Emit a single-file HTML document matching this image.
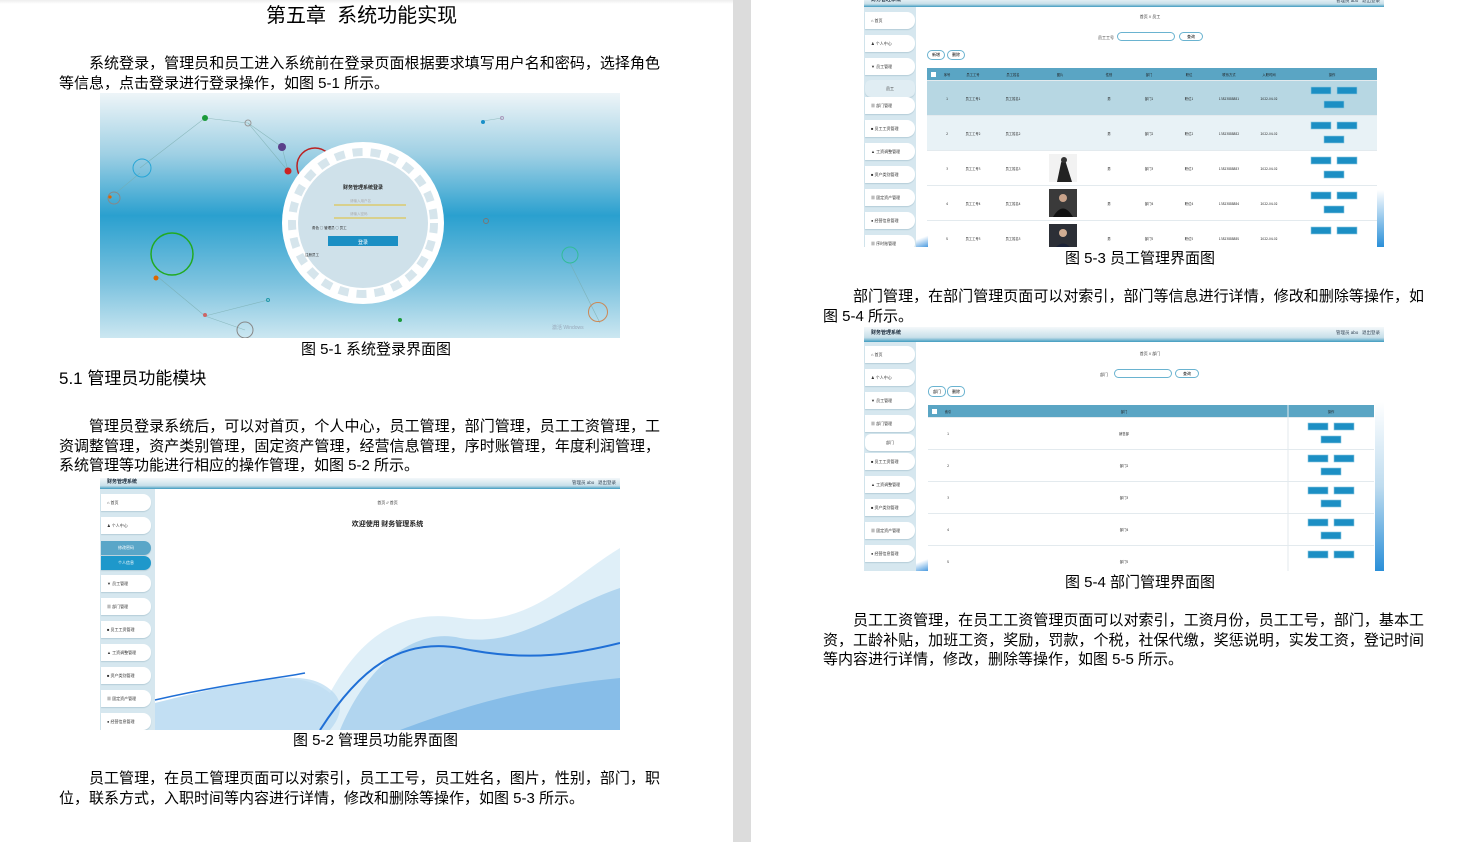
<!DOCTYPE html>
<html><head><meta charset="utf-8">
<style>
*{margin:0;padding:0;box-sizing:border-box}
body{width:1460px;height:842px;background:#fff;position:relative;overflow:hidden;font-family:"Liberation Sans","Noto Sans CJK SC",sans-serif;color:#000}
.a{position:absolute}
.p{position:absolute;width:601px;font-size:15px;line-height:19.6px;text-indent:30px;text-align:justify;text-align-last:left;font-family:"Liberation Sans","WenQuanYi Zen Hei","Noto Sans CJK SC",sans-serif}
.cap{position:absolute;font-size:15px;line-height:18px;white-space:nowrap;font-family:"Liberation Sans","WenQuanYi Zen Hei","Noto Sans CJK SC",sans-serif}
.shot{position:absolute;overflow:hidden;background:#fff}
.top{position:absolute;left:0;top:0;right:0;height:9px;background:linear-gradient(#f4f8fa,#c7dfe9 70%,#3f9bc0);font-size:5px;font-weight:bold;line-height:7px;padding-left:7px;color:#123}
.top span{position:absolute;right:4px;top:0;font-weight:normal;color:#345;font-size:4.5px}
.side{position:absolute;left:0;top:9px;width:52px;bottom:0;background:#d6e7ef}
.si{position:absolute;left:1px;width:50px;height:17px;background:#fff;border-radius:0 8px 8px 0;font-size:4px;line-height:17px;padding-left:6px;color:#333;box-shadow:0 1px 1px #b5cdd8}
.tb{font-size:4px;color:#333;text-align:center}
.row{position:absolute;left:0;right:0;border-bottom:1px solid #e3eaee}
</style></head><body>

<div class="a" style="left:733px;top:0;width:18px;height:842px;background:#dcdcdc"></div>
<div class="a" style="left:0;top:0;width:733px;height:4px;background:linear-gradient(#eee,#fff)"></div>

<div class="a" style="left:266px;top:4px;font-size:20px;line-height:24px;white-space:nowrap;font-family:'Liberation Sans','WenQuanYi Zen Hei',sans-serif">第五章&nbsp;&nbsp;系统功能实现</div>
<div class="p" style="left:59px;top:54px">系统登录，管理员和员工进入系统前在登录页面根据要求填写用户名和密码，选择角色等信息，点击登录进行登录操作，如图 5-1 所示。</div>

<div class="shot" style="left:100px;top:93px;width:520px;height:245px;background:linear-gradient(#eef5f8 0%,#9fd0e4 25%,#2aa0cf 50%,#7ec3df 78%,#cce7f1 100%)">
<svg width="520" height="245" style="position:absolute;left:0;top:0">
<g stroke="#7aa" stroke-width=".6" fill="none" opacity=".7">
<line x1="105" y1="25" x2="148" y2="30"/><line x1="148" y1="30" x2="182" y2="54"/><line x1="182" y1="54" x2="188" y2="78"/><line x1="148" y1="30" x2="188" y2="78"/><line x1="105" y1="25" x2="40" y2="75"/><line x1="40" y1="80" x2="10" y2="105"/><line x1="58" y1="184" x2="105" y2="223"/><line x1="105" y1="223" x2="168" y2="207"/><line x1="105" y1="223" x2="145" y2="237"/><line x1="383" y1="28" x2="402" y2="25"/><line x1="470" y1="170" x2="500" y2="230"/>
</g>
<circle cx="105" cy="25" r="3" fill="#1a9a3a"/><circle cx="148" cy="30" r="3" fill="none" stroke="#999"/>
<circle cx="182" cy="54" r="4" fill="#5a3f8a"/><circle cx="188" cy="78" r="3.5" fill="#c22"/>
<circle cx="215" cy="73" r="18" fill="none" stroke="#b22" stroke-width="1.5"/>
<circle cx="42" cy="75" r="9" fill="none" stroke="#29a6d6" stroke-width="1"/>
<circle cx="14" cy="105" r="6" fill="none" stroke="#888"/><circle cx="10" cy="104" r="1.6" fill="#d60"/>
<circle cx="72" cy="161" r="21" fill="none" stroke="#2a2" stroke-width="1.5"/><circle cx="56" cy="185" r="2.5" fill="#d60"/>
<circle cx="105" cy="222" r="2" fill="#c66"/><circle cx="145" cy="237" r="8" fill="none" stroke="#888"/><circle cx="168" cy="207" r="1.5" fill="none" stroke="#29a"/>
<circle cx="383" cy="29" r="2" fill="#1a8fc8"/><circle cx="402" cy="25" r="1.5" fill="none" stroke="#a9b"/>
<circle cx="386" cy="128" r="2.5" fill="none" stroke="#777"/><circle cx="300" cy="227" r="2" fill="#1a9a3a"/>
<circle cx="470" cy="162" r="8" fill="none" stroke="#3b9"/><circle cx="498" cy="219" r="9.5" fill="none" stroke="#c85" stroke-width="1"/>
<circle cx="263" cy="130" r="81" fill="#fff"/>
<circle cx="263" cy="130" r="71" fill="none" stroke="#d6e5ec" stroke-width="8" stroke-dasharray="10 8"/>
<circle cx="263" cy="130" r="65" fill="#cfe1ea"/>
<text x="263" y="96" font-size="5" font-weight="bold" text-anchor="middle" fill="#222" font-family="Noto Sans CJK SC">财务管理系统登录</text>
<line x1="234" y1="112" x2="306" y2="112" stroke="#e2c030"/><line x1="234" y1="125" x2="306" y2="125" stroke="#e2c030"/>
<text x="250" y="109" font-size="3.5" fill="#aaa" font-family="Noto Sans CJK SC">请输入用户名</text>
<text x="250" y="122" font-size="3.5" fill="#aaa" font-family="Noto Sans CJK SC">请输入密码</text>
<text x="212" y="136" font-size="3.5" fill="#222" font-family="Noto Sans CJK SC">角色  ○ 管理员 ○ 员工</text>
<rect x="228" y="143" width="70" height="10" fill="#1b8fc4"/>
<text x="263" y="151" font-size="5" text-anchor="middle" fill="#fff" font-family="Noto Sans CJK SC">登录</text>
<text x="205" y="163" font-size="3.5" fill="#222" font-family="Noto Sans CJK SC">注册员工</text>
<text x="452" y="236" font-size="5" fill="#9ab" font-family="Liberation Sans">激活 Windows</text>
</svg>
</div>
<div class="cap" style="left:301px;top:341px">图 5-1 系统登录界面图</div>
<div class="a" style="left:59px;top:368px;font-size:17px;line-height:21px;white-space:nowrap;font-family:'Liberation Sans','WenQuanYi Zen Hei',sans-serif">5.1 管理员功能模块</div>
<div class="p" style="left:59px;top:417px">管理员登录系统后，可以对首页，个人中心，员工管理，部门管理，员工工资管理，工资调整管理，资产类别管理，固定资产管理，经营信息管理，序时账管理，年度利润管理，系统管理等功能进行相应的操作管理，如图 5-2 所示。</div>

<div class="shot" style="left:100px;top:478px;width:520px;height:252px">
<div class="top" style="height:11px;line-height:9px">财务管理系统<span style="line-height:9px">管理员 abo &nbsp; 退出登录</span></div>
<div class="side" style="top:11px;width:55px">
<div class="si" style="top:5px">⌂ 首页</div>
<div class="si" style="top:28px">♟ 个人中心</div>
<div class="si" style="top:52px;background:#5aa6c8;color:#fff;text-align:center;padding:0;height:14px;line-height:14px">修改密码</div>
<div class="si" style="top:67px;background:#1e98cb;color:#fff;text-align:center;padding:0;height:14px;line-height:14px">个人信息</div>
<div class="si" style="top:86px">▼ 员工管理</div>
<div class="si" style="top:109px">▦ 部门管理</div>
<div class="si" style="top:132px">■ 员工工资管理</div>
<div class="si" style="top:155px">▲ 工资调整管理</div>
<div class="si" style="top:178px">■ 资产类别管理</div>
<div class="si" style="top:201px">▦ 固定资产管理</div>
<div class="si" style="top:224px">● 经营信息管理</div>
</div>
<div class="a tb" style="left:55px;right:0;top:22px">首页 // 首页</div>
<div class="a" style="left:55px;right:0;top:41px;font-size:7px;font-weight:bold;text-align:center;color:#222;font-family:'Noto Sans CJK SC',sans-serif">欢迎使用 财务管理系统</div>
<svg width="520" height="252" style="position:absolute;left:0;top:0">
<path d="M55 225 C150 200 200 190 230 215 C260 160 300 130 360 140 C430 150 470 100 520 70 L520 252 L55 252 Z" fill="#d7ebf6" opacity=".8"/>
<path d="M240 252 C270 180 320 150 360 160 C420 170 460 130 520 110 L520 252 Z" fill="#9ccbeb" opacity=".7"/>
<path d="M55 225 C120 210 190 190 220 205 C250 220 240 240 230 252 L55 252Z" fill="#b5d9f1" opacity=".7"/>
<path d="M220 252 C260 190 300 160 360 170 C430 185 480 175 520 165" stroke="#1f6fd6" stroke-width="2" fill="none"/>
<path d="M55 222 C130 205 180 200 205 195" stroke="#1f6fd6" stroke-width="1.5" fill="none"/>
<path d="M300 252 C360 230 420 210 520 200 L520 252Z" fill="#6aaee3" opacity=".6"/>
</svg>
</div>
<div class="cap" style="left:293px;top:732px">图 5-2 管理员功能界面图</div>
<div class="p" style="left:59px;top:769px">员工管理，在员工管理页面可以对索引，员工工号，员工姓名，图片，性别，部门，职位，联系方式，入职时间等内容进行详情，修改和删除等操作，如图 5-3 所示。</div>

<div class="shot" style="left:864px;top:0;width:520px;height:247px">
<div class="top" style="height:10px;top:-3px;line-height:7px">财务管理系统<span style="line-height:7px">管理员 abo &nbsp; 退出登录</span></div>
<div class="side" style="top:7px">
<div class="si" style="top:5px">⌂ 首页</div>
<div class="si" style="top:28px">♟ 个人中心</div>
<div class="si" style="top:51px">▼ 员工管理</div>
<div class="si" style="top:73px;background:#e0edf3;text-align:center;padding:0;border-radius:6px">员工</div>
<div class="si" style="top:90px">▦ 部门管理</div>
<div class="si" style="top:113px">■ 员工工资管理</div>
<div class="si" style="top:136px">▲ 工资调整管理</div>
<div class="si" style="top:159px">■ 资产类别管理</div>
<div class="si" style="top:182px">▦ 固定资产管理</div>
<div class="si" style="top:205px">● 经营信息管理</div>
<div class="si" style="top:228px">▦ 序时账管理</div>
</div>
<div class="a tb" style="left:52px;right:0;top:14px">首页 // 员工</div>
<div class="a tb" style="left:234px;top:35px">员工工号</div>
<div class="a" style="left:253px;top:32px;width:58px;height:9px;border:1px solid #6ab3d0;border-radius:5px"></div>
<div class="a" style="left:315px;top:32px;width:24px;height:9px;border:1px solid #6ab3d0;border-radius:5px;font-size:4px;text-align:center;line-height:7px">查询</div>
<div class="a" style="left:63px;top:50px;width:18px;height:10px;border:1px solid #6ab3d0;border-radius:5px;font-size:4px;text-align:center;line-height:8px">新增</div>
<div class="a" style="left:83px;top:50px;width:18px;height:10px;border:1px solid #6ab3d0;border-radius:5px;font-size:4px;text-align:center;line-height:8px">删除</div>
<div class="a" style="left:63px;top:68px;width:450px;height:190px">
<div class="row" style="top:0;height:13px;background:#5aa5c4"></div>
<div class="row" style="top:13px;height:35px;background:#b7d7e3"></div>
<div class="row" style="top:48px;height:35px;background:#e8f2f6"></div>
<div class="row" style="top:83px;height:35px"></div>
<div class="row" style="top:118px;height:35px"></div>
<div class="row" style="top:153px;height:35px"></div>
<svg width="450" height="190" style="position:absolute;left:0;top:0;font-family:'Noto Sans CJK SC',sans-serif">
<g fill="#222" font-size="3.3" text-anchor="middle">
<text x="20" y="8">序号</text><text x="46" y="8">员工工号</text><text x="86" y="8">员工姓名</text><text x="133" y="8">图片</text><text x="182" y="8">性别</text><text x="222" y="8">部门</text><text x="262" y="8">职位</text><text x="302" y="8">联系方式</text><text x="342" y="8">入职时间</text><text x="405" y="8">操作</text>
<text x="20" y="32">1</text><text x="46" y="32">员工工号1</text><text x="86" y="32">员工姓名1</text><text x="182" y="32">男</text><text x="222" y="32">部门1</text><text x="262" y="32">职位1</text><text x="302" y="32">13823888881</text><text x="342" y="32">2022-04-02</text>
<text x="20" y="67">2</text><text x="46" y="67">员工工号2</text><text x="86" y="67">员工姓名2</text><text x="182" y="67">男</text><text x="222" y="67">部门2</text><text x="262" y="67">职位2</text><text x="302" y="67">13823888882</text><text x="342" y="67">2022-04-02</text>
<text x="20" y="102">3</text><text x="46" y="102">员工工号3</text><text x="86" y="102">员工姓名3</text><text x="182" y="102">男</text><text x="222" y="102">部门3</text><text x="262" y="102">职位3</text><text x="302" y="102">13823888883</text><text x="342" y="102">2022-04-02</text>
<text x="20" y="137">4</text><text x="46" y="137">员工工号4</text><text x="86" y="137">员工姓名4</text><text x="182" y="137">男</text><text x="222" y="137">部门4</text><text x="262" y="137">职位4</text><text x="302" y="137">13823888884</text><text x="342" y="137">2022-04-02</text>
<text x="20" y="172">5</text><text x="46" y="172">员工工号5</text><text x="86" y="172">员工姓名5</text><text x="182" y="172">男</text><text x="222" y="172">部门5</text><text x="262" y="172">职位5</text><text x="302" y="172">13823888885</text><text x="342" y="172">2022-04-02</text>
</g>
<rect x="4" y="4" width="5" height="5" fill="#fff"/>
<g fill="#1c8fc4" stroke="#8cc8e0" stroke-width=".6">
<rect x="384" y="19" width="20" height="7"/><rect x="410" y="19" width="20" height="7"/><rect x="397" y="33" width="20" height="7"/>
<rect x="384" y="54" width="20" height="7"/><rect x="410" y="54" width="20" height="7"/><rect x="397" y="68" width="20" height="7"/>
<rect x="384" y="89" width="20" height="7"/><rect x="410" y="89" width="20" height="7"/><rect x="397" y="103" width="20" height="7"/>
<rect x="384" y="124" width="20" height="7"/><rect x="410" y="124" width="20" height="7"/><rect x="397" y="138" width="20" height="7"/>
<rect x="384" y="159" width="20" height="7"/><rect x="410" y="159" width="20" height="7"/>
</g>
<rect x="122" y="86" width="28" height="28" fill="#f2f2f2"/><path d="M130 114 L134 95 Q136 88 139 95 L145 114Z" fill="#222"/><circle cx="137" cy="92" r="3" fill="#333"/>
<rect x="122" y="121" width="28" height="28" fill="#3a3a3a"/><path d="M126 149 Q136 132 146 149Z" fill="#111"/><circle cx="136" cy="130" r="4" fill="#c9a38a"/>
<rect x="122" y="156" width="28" height="28" fill="#2c2f36"/><path d="M125 184 Q136 167 147 184Z" fill="#1a2238"/><circle cx="136" cy="165" r="4" fill="#d0ad93"/>
</svg>
</div>
<div class="a" style="left:513px;top:190px;width:7px;height:57px;background:linear-gradient(#fff,#2a8fd8)"></div>
<div class="a" style="left:52px;top:232px;width:12px;height:15px;background:linear-gradient(160deg,#fff 40%,#4b9be0)"></div>
</div>
<div class="cap" style="left:1065px;top:250px">图 5-3 员工管理界面图</div>
<div class="p" style="left:823px;top:287px">部门管理，在部门管理页面可以对索引，部门等信息进行详情，修改和删除等操作，如图 5-4 所示。</div>

<div class="shot" style="left:864px;top:327px;width:520px;height:244px">
<div class="top" style="height:15px;line-height:12px">财务管理系统<span style="line-height:12px">管理员 abo &nbsp; 退出登录</span></div>
<div class="side" style="top:15px">
<div class="si" style="top:4px">⌂ 首页</div>
<div class="si" style="top:27px">♟ 个人中心</div>
<div class="si" style="top:50px">▼ 员工管理</div>
<div class="si" style="top:73px">▦ 部门管理</div>
<div class="si" style="top:92px;text-align:center;padding:0;border-radius:6px">部门</div>
<div class="si" style="top:111px">■ 员工工资管理</div>
<div class="si" style="top:134px">▲ 工资调整管理</div>
<div class="si" style="top:157px">■ 资产类别管理</div>
<div class="si" style="top:180px">▦ 固定资产管理</div>
<div class="si" style="top:203px">● 经营信息管理</div>
</div>
<div class="a tb" style="left:52px;right:0;top:24px">首页 // 部门</div>
<div class="a tb" style="left:236px;top:45px">部门</div>
<div class="a" style="left:250px;top:42px;width:58px;height:9px;border:1px solid #6ab3d0;border-radius:5px"></div>
<div class="a" style="left:311px;top:42px;width:24px;height:9px;border:1px solid #6ab3d0;border-radius:5px;font-size:4px;text-align:center;line-height:7px">查询</div>
<div class="a" style="left:64px;top:59px;width:18px;height:11px;border:1px solid #6ab3d0;border-radius:5px;font-size:4px;text-align:center;line-height:9px">部门</div>
<div class="a" style="left:83px;top:59px;width:18px;height:11px;border:1px solid #6ab3d0;border-radius:5px;font-size:4px;text-align:center;line-height:9px">删除</div>
<div class="a" style="left:64px;top:78px;width:446px;height:170px">
<div class="row" style="top:0;height:13px;background:#5aa5c4"></div>
<div class="row" style="top:13px;height:32px"></div>
<div class="row" style="top:45px;height:32px"></div>
<div class="row" style="top:77px;height:32px"></div>
<div class="row" style="top:109px;height:32px"></div>
<svg width="446" height="170" style="position:absolute;left:0;top:0;font-family:'Noto Sans CJK SC',sans-serif">
<rect x="4" y="4" width="5" height="5" fill="#fff"/>
<line x1="360" y1="0" x2="360" y2="170" stroke="#e3eaee"/>
<g fill="#222" font-size="3.3" text-anchor="middle">
<text x="20" y="8">索引</text><text x="196" y="8">部门</text><text x="403" y="8">操作</text>
<text x="20" y="30">1</text><text x="196" y="30">销售部</text>
<text x="20" y="62">2</text><text x="196" y="62">部门2</text>
<text x="20" y="94">3</text><text x="196" y="94">部门3</text>
<text x="20" y="126">4</text><text x="196" y="126">部门4</text>
<text x="20" y="158">5</text><text x="196" y="158">部门5</text>
</g>
<g fill="#1c8fc4" stroke="#8cc8e0" stroke-width=".6">
<rect x="380" y="18" width="20" height="7"/><rect x="406" y="18" width="20" height="7"/><rect x="393" y="31" width="20" height="7"/>
<rect x="380" y="50" width="20" height="7"/><rect x="406" y="50" width="20" height="7"/><rect x="393" y="63" width="20" height="7"/>
<rect x="380" y="82" width="20" height="7"/><rect x="406" y="82" width="20" height="7"/><rect x="393" y="95" width="20" height="7"/>
<rect x="380" y="114" width="20" height="7"/><rect x="406" y="114" width="20" height="7"/><rect x="393" y="127" width="20" height="7"/>
<rect x="380" y="146" width="20" height="7"/><rect x="406" y="146" width="20" height="7"/>
</g>
</svg>
</div>
<div class="a" style="left:511px;top:75px;width:9px;height:169px;background:linear-gradient(#fff,#bfdcef 50%,#2a8fd8)"></div>
<div class="a" style="left:52px;top:228px;width:12px;height:16px;background:linear-gradient(160deg,#fff 40%,#4b9be0)"></div>
</div>
<div class="cap" style="left:1065px;top:574px">图 5-4 部门管理界面图</div>
<div class="p" style="left:823px;top:611px">员工工资管理，在员工工资管理页面可以对索引，工资月份，员工工号，部门，基本工资，工龄补贴，加班工资，奖励，罚款，个税，社保代缴，奖惩说明，实发工资，登记时间等内容进行详情，修改，删除等操作，如图 5-5 所示。</div>

</body></html>
